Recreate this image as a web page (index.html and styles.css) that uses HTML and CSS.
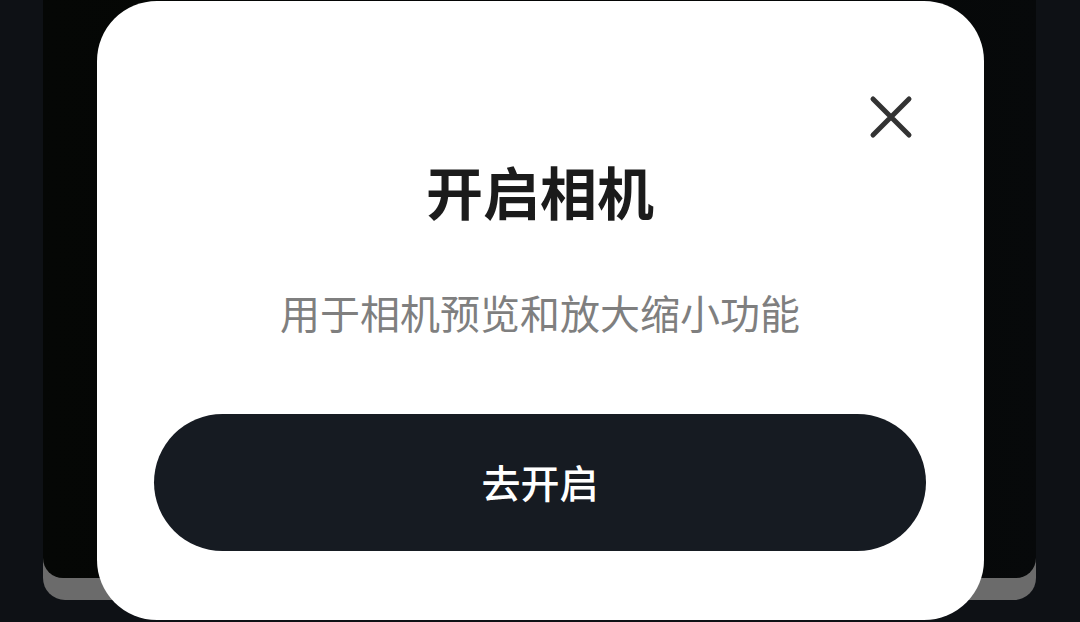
FILE: index.html
```html
<!DOCTYPE html>
<html lang="zh-CN">
<head>
<meta charset="utf-8">
<title>开启相机</title>
<link rel="stylesheet" href="styles.css">
</head>
<body>
<div class="stage">
  <div class="backdrop">
    <div class="backdrop-inner"></div>
  </div>
  <div class="dialog" role="dialog" aria-labelledby="dlg-title">
    <button class="close" aria-label="关闭">
      <svg width="44" height="44" viewBox="0 0 44 44"><path d="M4 4 L40 40 M40 4 L4 40" stroke="#333333" stroke-width="5" stroke-linecap="round" fill="none"/></svg>
    </button>
    <h1 class="title" id="dlg-title">开启相机</h1>
    <p class="desc">用于相机预览和放大缩小功能</p>
    <button class="primary">去开启</button>
  </div>
</div>
</body>
</html>
```
FILE: styles.css
```css
html, body {
  margin: 0;
  padding: 0;
  height: 100%;
  background: #0e1115;
  overflow: hidden;
  font-family: "Noto Sans CJK SC", "Noto Sans", sans-serif;
}
.stage {
  position: relative;
  width: 1080px;
  height: 622px;
  padding: 0 44px 0 43px;
  box-sizing: border-box;
}
.backdrop {
  height: 600px;
  background: #6b6b6b;
  border-radius: 0 0 22px 22px;
}
.backdrop-inner {
  height: 578px;
  background: linear-gradient(90deg, #050705 0%, #030504 50%, #07090a 100%);
  border-radius: 0 0 20px 20px;
}
.dialog {
  position: absolute;
  left: 97px;
  top: 1px;
  width: 887px;
  height: 619px;
  box-sizing: border-box;
  background: #ffffff;
  border-radius: 60px;
  display: flex;
  flex-direction: column;
  align-items: center;
  padding: 155px 58px 0 57px;
}
.close {
  position: absolute;
  top: 94px;
  right: 71px;
  width: 44px;
  height: 44px;
  padding: 0;
  border: 0;
  background: none;
  display: flex;
}
.title {
  margin: 0;
  font-size: 57px;
  line-height: 68px;
  font-weight: 600;
  color: #1b1b1b;
  letter-spacing: 0;
}
.desc {
  margin: 64px 0 0;
  font-size: 40px;
  line-height: 48px;
  font-weight: 400;
  color: #7f7f7f;
}
.primary {
  margin-top: 78px;
  width: 100%;
  height: 137px;
  border: 0;
  border-radius: 69px;
  background: #161b22;
  color: #ffffff;
  font-family: inherit;
  font-size: 39px;
  font-weight: 500;
  padding: 0 0 3px;
}
```
